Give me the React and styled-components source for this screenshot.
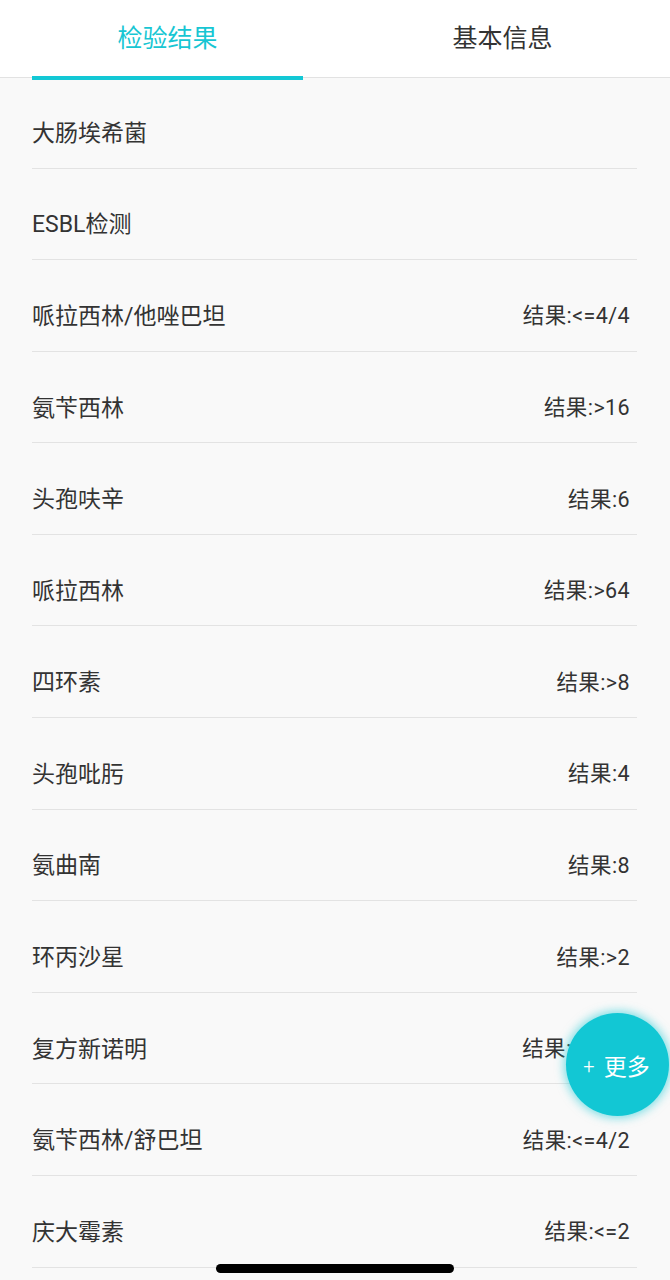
import React from "react";
import styled, { createGlobalStyle } from "styled-components";

const Global = createGlobalStyle`
  html, body { margin: 0; padding: 0; }
  body {
    background: #f9f9f9;
    font-family: Roboto, "Noto Sans CJK SC", sans-serif;
    color: #333;
  }
  #root { height: 1280px; overflow: hidden; }
`;

const Page = styled.div`
  position: relative;
  width: 670px;
  height: 1280px;
  overflow: hidden;
  background: #f9f9f9;
`;

const TabBar = styled.div`
  display: flex;
  height: 78px;
  background: #fff;
  border-bottom: 1px solid #e2e2e2;
  box-sizing: border-box;
`;

const Tab = styled.div`
  position: relative;
  flex: 1;
  display: flex;
  align-items: center;
  justify-content: center;
  padding-bottom: 5px;
  font-size: 25px;
  color: ${(p) => (p.$active ? "#17c6d3" : "#333")};
  &::after {
    content: "";
    display: ${(p) => (p.$active ? "block" : "none")};
    position: absolute;
    left: 32px;
    right: 32px;
    bottom: -3px;
    height: 4px;
    background: #13c8d5;
  }
`;

const List = styled.div`
  display: flex;
  flex-direction: column;
  padding: 0 33px 0 32px;
`;

const Row = styled.div`
  display: flex;
  align-items: center;
  justify-content: space-between;
  height: 91.58px;
  box-sizing: border-box;
  padding: 17px 7px 0 0;
  border-bottom: 1.5px solid #e3e3e3;
  &:first-child {
    height: 90.6px;
  }
`;

const Name = styled.span`
  font-size: 23px;
  color: #333;
`;

const Result = styled.span`
  font-size: 21.5px;
  letter-spacing: 0.4px;
  color: #333;
`;

const Fab = styled.div`
  position: absolute;
  left: 566px;
  top: 1013px;
  width: 103px;
  height: 103px;
  border-radius: 50%;
  background: #12c7d4;
  box-shadow: 0 0 10px 2px rgba(18, 199, 212, 0.55);
  display: flex;
  align-items: center;
  justify-content: center;
  gap: 9px;
  padding-right: 2px;
  box-sizing: border-box;
  color: #fff;
  font-size: 23px;
`;

const Plus = styled.span`
  font-size: 20px;
  font-weight: 300;
  margin-top: 3px;
`;

const HomeBar = styled.div`
  position: absolute;
  left: 216px;
  top: 1264px;
  width: 238px;
  height: 9px;
  border-radius: 5px;
  background: #000;
`;

const rows = [
  ["大肠埃希菌", ""],
  ["ESBL检测", ""],
  ["哌拉西林/他唑巴坦", "结果:<=4/4"],
  ["氨苄西林", "结果:>16"],
  ["头孢呋辛", "结果:6"],
  ["哌拉西林", "结果:>64"],
  ["四环素", "结果:>8"],
  ["头孢吡肟", "结果:4"],
  ["氨曲南", "结果:8"],
  ["环丙沙星", "结果:>2"],
  ["复方新诺明", "结果:>4/76"],
  ["氨苄西林/舒巴坦", "结果:<=4/2"],
  ["庆大霉素", "结果:<=2"],
];

export default function App() {
  return (
    <Page>
      <Global />
      <TabBar>
        <Tab $active>检验结果</Tab>
        <Tab>基本信息</Tab>
      </TabBar>
      <List>
        {rows.map(([n, r]) => (
          <Row key={n}>
            <Name>{n}</Name>
            {r && <Result>{r}</Result>}
          </Row>
        ))}
      </List>
      <Fab>
        <Plus>+</Plus>
        <span>更多</span>
      </Fab>
      <HomeBar />
    </Page>
  );
}
